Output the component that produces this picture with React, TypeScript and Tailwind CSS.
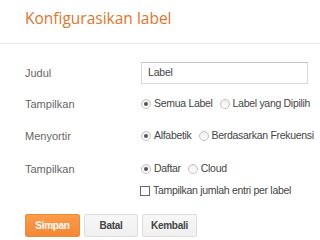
import React from "react";

function Radio({ checked, label }: { checked?: boolean; label: string }) {
  return (
    <span className="flex items-center whitespace-nowrap">
      <span className="flex h-[10px] w-[10px] shrink-0 items-center justify-center rounded-full border border-[#c2c2c2] bg-gradient-to-b from-[#efefef] to-[#ffffff]">
        {checked && <span className="h-[4px] w-[4px] rounded-full bg-[#555]" />}
      </span>
      <span className="ml-[3px] mr-[7px] text-[10.5px] tracking-[-0.3px] text-[#444]">{label}</span>
    </span>
  );
}

export default function App() {
  return (
    <div className="h-[240px] w-[320px] overflow-hidden bg-white font-['Liberation_Sans',Arial,sans-serif]">
      <div className="h-[44px] border-b border-[#ebebeb] pl-[25px] pt-[7px]">
        <h1 className="font-['Open_Sans',sans-serif] text-[15.5px] leading-[22px] text-[#e0752b]">
          Konfigurasikan label
        </h1>
      </div>
      <div className="pl-[25px]">
        <div className="mt-[18px] flex h-[22px] items-center">
          <span className="w-[116px] shrink-0 text-[11px] text-[#666]">Judul</span>
          <div className="flex h-[22px] w-[167px] items-center border border-[#dadada] border-t-[#c4c4c4] pl-[6px] text-[10.5px] tracking-[-0.2px] text-[#444]">
            Label
          </div>
        </div>
        <div className="mt-[12px] flex h-[16px] items-center">
          <span className="w-[116px] shrink-0 text-[11px] text-[#666]">Tampilkan</span>
          <Radio checked label="Semua Label" />
          <Radio label="Label yang Dipilih" />
        </div>
        <div className="mt-[16px] flex h-[16px] items-center">
          <span className="w-[116px] shrink-0 text-[11px] text-[#666]">Menyortir</span>
          <Radio checked label="Alfabetik" />
          <Radio label="Berdasarkan Frekuensi" />
        </div>
        <div className="mt-[17px] flex h-[16px] items-center">
          <span className="w-[116px] shrink-0 text-[11px] text-[#666]">Tampilkan</span>
          <Radio checked label="Daftar" />
          <Radio label="Cloud" />
        </div>
        <div className="mt-[6px] flex h-[16px] items-center whitespace-nowrap pl-[115px]">
          <span className="h-[10px] w-[10px] shrink-0 border border-[#666] bg-white" />
          <span className="ml-[3px] text-[10.5px] tracking-[-0.3px] text-[#444]">Tampilkan jumlah entri per label</span>
        </div>
        <div className="mt-[15px] flex gap-[4px]">
          <button className="h-[23px] w-[55px] rounded-[2px] border border-[#ec8a3c] bg-gradient-to-b from-[#fd9c4a] to-[#f58634] text-[10px] font-bold tracking-[-0.3px] text-white">
            Simpan
          </button>
          <button className="h-[23px] w-[54px] rounded-[2px] border border-[#dcdcdc] bg-gradient-to-b from-[#f7f7f7] to-[#f0f0f0] text-[10px] font-bold tracking-[-0.3px] text-[#444]">
            Batal
          </button>
          <button className="h-[23px] w-[55px] rounded-[2px] border border-[#dcdcdc] bg-gradient-to-b from-[#f7f7f7] to-[#f0f0f0] text-[10px] font-bold tracking-[-0.3px] text-[#444]">
            Kembali
          </button>
        </div>
      </div>
    </div>
  );
}
